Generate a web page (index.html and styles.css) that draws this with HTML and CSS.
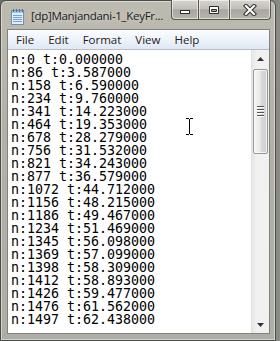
FILE: index.html
```html
<!DOCTYPE html>
<html>
<head>
<meta charset="utf-8">
<link rel="stylesheet" href="styles.css">
</head>
<body>
<div class="window">
  <div class="titlebar">
    <svg class="appicon" width="13" height="16" viewBox="0 0 13 16">
      <rect x="0.5" y="1.5" width="12" height="14" fill="#dfeefa" stroke="#6f8fb0"/>
      <rect x="1" y="2" width="11" height="2" fill="#9fc3e6"/>
      <g stroke="#7aa2c8" stroke-width="1">
        <line x1="2" y1="6.5" x2="11" y2="6.5"/>
        <line x1="2" y1="8.5" x2="11" y2="8.5"/>
        <line x1="2" y1="10.5" x2="11" y2="10.5"/>
        <line x1="2" y1="12.5" x2="11" y2="12.5"/>
      </g>
      <g fill="#5a6f86">
        <rect x="2" y="0" width="1" height="3"/>
        <rect x="5" y="0" width="1" height="3"/>
        <rect x="8" y="0" width="1" height="3"/>
        <rect x="11" y="0" width="1" height="3"/>
      </g>
    </svg>
    <span class="title">[dp]Manjandani-1_KeyFr...</span>
    <div class="caption-btns">
      <div class="cbtn min">
        <svg width="12" height="6" viewBox="0 0 12 6"><rect x="1.5" y="1.5" width="9" height="3" fill="#fff" stroke="#2e2e2e"/></svg>
      </div>
      <div class="cbtn max">
        <svg width="12" height="10" viewBox="0 0 12 10"><path d="M1.5 1.5H10.5V8.5H1.5Z M3.5 4.5H8.5V6.5H3.5Z" fill="#fff" fill-rule="evenodd" stroke="#2e2e2e"/></svg>
      </div>
      <div class="cbtn close">
        <svg width="14" height="12" viewBox="0 0 14 12"><path d="M3 2L11 10M11 2L3 10" stroke="#2e2e2e" stroke-width="4.2" stroke-linecap="square"/><path d="M3 2L11 10M11 2L3 10" stroke="#fff" stroke-width="2.2" stroke-linecap="square"/></svg>
      </div>
    </div>
  </div>
  <div class="client">
    <div class="menubar">
      <span class="mi">File</span>
      <span class="mi">Edit</span>
      <span class="mi">Format</span>
      <span class="mi">View</span>
      <span class="mi">Help</span>
    </div>
    <div class="editor">
      <pre class="text">n:0 t:0.000000
n:86 t:3.587000
n:158 t:6.590000
n:234 t:9.760000
n:341 t:14.223000
n:464 t:19.353000
n:678 t:28.279000
n:756 t:31.532000
n:821 t:34.243000
n:877 t:36.579000
n:1072 t:44.712000
n:1156 t:48.215000
n:1186 t:49.467000
n:1234 t:51.469000
n:1345 t:56.098000
n:1369 t:57.099000
n:1398 t:58.309000
n:1412 t:58.893000
n:1426 t:59.477000
n:1476 t:61.562000
n:1497 t:62.438000</pre>
      <svg class="ibeam" width="7" height="17" viewBox="0 0 7 17">
        <path d="M0 0.5H3M4 0.5H7M3.5 1V16M0 16.5H3M4 16.5H7" stroke="#000" stroke-width="1" fill="none"/>
      </svg>
      <div class="scrollbar">
        <div class="sb-arrow"><svg width="7" height="4" viewBox="0 0 7 4"><path d="M3.5 0L7 4H0Z" fill="#333"/></svg></div>
        <div class="sb-thumb">
          <div class="grip"><i></i><i></i><i></i><i></i></div>
        </div>
        <div class="sb-track"></div>
        <div class="sb-arrow"><svg width="7" height="4" viewBox="0 0 7 4"><path d="M0 0H7L3.5 4Z" fill="#333"/></svg></div>
      </div>
    </div>
  </div>
</div>
</body>
</html>
```
FILE: styles.css
```css
html, body {
  margin: 0;
  padding: 0;
}
body {
  width: 280px;
  height: 341px;
  overflow: hidden;
  background: linear-gradient(90deg, #6b6e66 0%, #2e302c 60%, #8a8c86 100%);
}
.window {
  width: 276px;
  height: 341px;
  box-sizing: border-box;
  border: 1px solid #4a4c48;
  border-radius: 6px 6px 0 0;
  background: linear-gradient(180deg, #bdbab0 0%, #b2b0a7 40%, #aeada6 100%);
  box-shadow: inset 0 0 0 1px rgba(255,255,255,0.45);
  padding: 0 5px 6px 6px;
  display: flex;
  flex-direction: column;
}
.titlebar {
  height: 28px;
  display: flex;
  align-items: flex-start;
  position: relative;
}
.appicon {
  margin: 8px 0 0 4px;
}
.title {
  font-family: "Open Sans", "Noto Sans", sans-serif;
  font-size: 11.5px;
  letter-spacing: -0.3px;
  color: #1c1c1c;
  margin: 7px 0 0 7px;
  line-height: 16px;
  white-space: nowrap;
  text-shadow: 0 0 6px rgba(255,255,255,0.7);
}
.caption-btns {
  position: absolute;
  right: -1px;
  top: -1px;
  display: flex;
  height: 20px;
}
.cbtn {
  height: 20px;
  box-sizing: border-box;
  border: 1px solid #55564f;
  border-top: none;
  background: linear-gradient(180deg, #d6d4cc 0%, #c2c0b8 45%, #a9a79f 52%, #b6b4ac 100%);
  box-shadow: inset 0 0 0 1px rgba(255,255,255,0.55);
  display: flex;
  align-items: center;
  justify-content: center;
}
.cbtn.min {
  width: 27px;
  border-radius: 0 0 0 4px;
  border-right: none;
  padding-top: 4px;
}
.cbtn.max {
  width: 31px;
  border-right: none;
}
.cbtn.close {
  width: 42px;
  border-radius: 0 0 4px 0;
}
.client {
  flex: 1;
  display: flex;
  flex-direction: column;
  border: 1px solid #82837f;
  background: #fff;
  min-height: 0;
}
.menubar {
  height: 19px;
  background: linear-gradient(180deg, #fbfcfe 0%, #eef3fa 50%, #dfe8f4 100%);
  border-bottom: 1px solid #b6bcc6;
  display: flex;
  align-items: center;
  font-family: "Open Sans", "Noto Sans", sans-serif;
  font-size: 11.5px;
  color: #222;
  padding-left: 1px;
}
.mi {
  padding: 0 7px;
  line-height: 17px;
}
.editor {
  flex: 1;
  display: flex;
  position: relative;
  overflow: hidden;
  min-height: 0;
}
.text {
  flex: 1;
  margin: 0;
  padding: 3px 0 0 3px;
  font-family: "DejaVu Sans Mono", monospace;
  font-size: 13.3px;
  line-height: 13px;
  color: #000;
  overflow: hidden;
}
.ibeam {
  position: absolute;
  left: 178px;
  top: 68px;
}
.scrollbar {
  width: 17px;
  display: flex;
  flex-direction: column;
  background: linear-gradient(90deg, #e6e6e6 0%, #f2f2f2 30%, #f0f0f0 100%);
  border-left: 1px solid #e2e2e2;
}
.sb-arrow {
  height: 17px;
  display: flex;
  align-items: center;
  justify-content: center;
}
.sb-thumb {
  height: 85px;
  margin: 2px 1px 0 1px;
  box-sizing: border-box;
  border: 1px solid #979797;
  border-radius: 2px;
  background: linear-gradient(90deg, #f3f3f3 0%, #ebebeb 45%, #d9d9d9 55%, #cfcfcf 100%);
  box-shadow: inset 0 0 0 1px rgba(255,255,255,0.7);
  display: flex;
  align-items: center;
  justify-content: center;
}
.grip {
  display: flex;
  flex-direction: column;
  gap: 1px;
}
.grip i {
  display: block;
  width: 7px;
  height: 1px;
  background: #555;
  border-bottom: 1px solid #fff;
}
.sb-track {
  flex: 1;
}
```
